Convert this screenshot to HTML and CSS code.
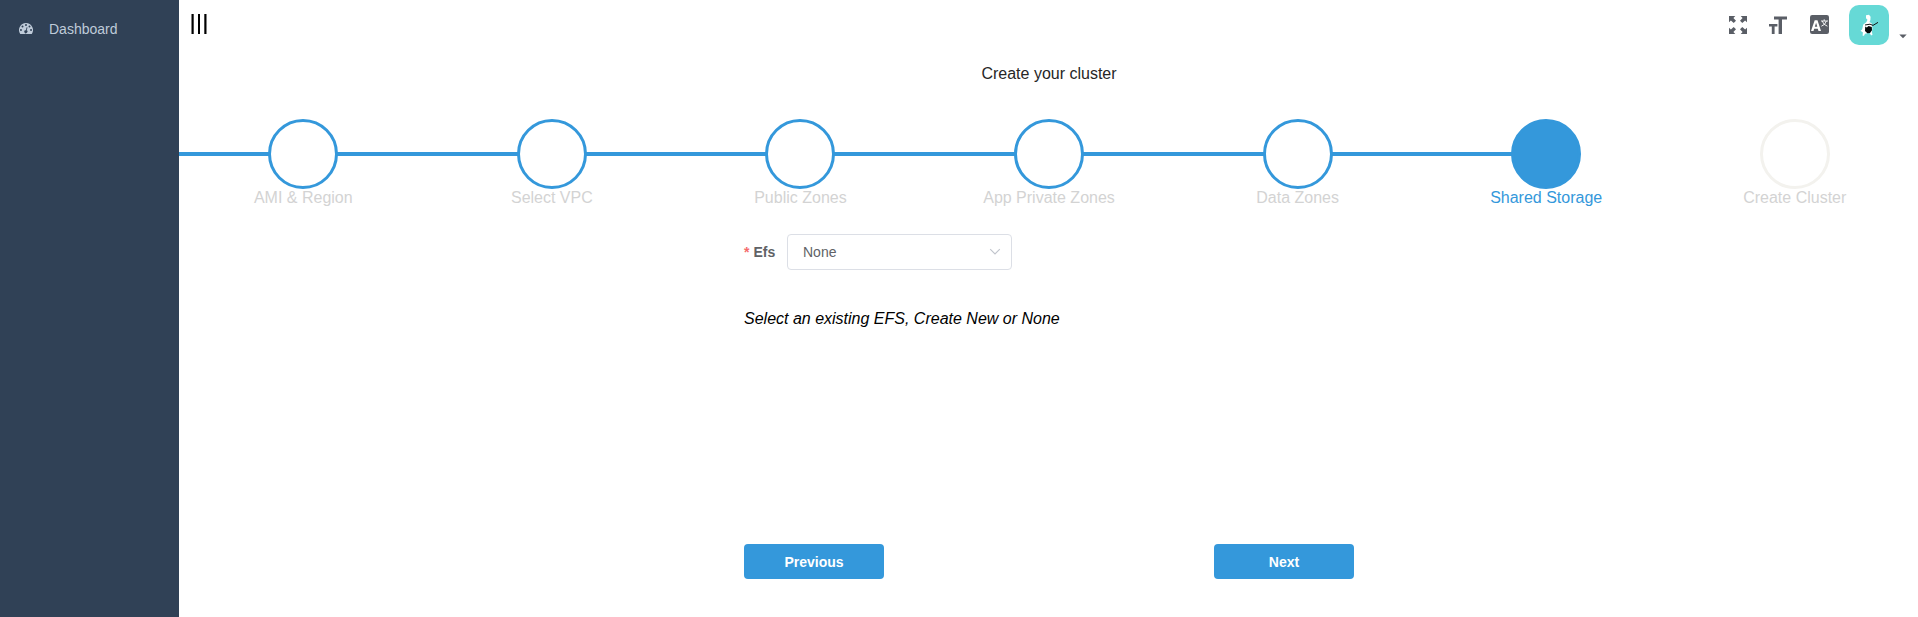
FILE: index.html
```html
<!DOCTYPE html>
<html lang="en">
<head>
<meta charset="utf-8">
<title>Create your cluster</title>
<link rel="stylesheet" href="styles.css">
</head>
<body>
<div class="app">
  <nav class="sidebar">
    <a class="menu-item">
      <svg class="menu-icon" width="14" height="11" viewBox="0 0 128 100"><path fill="currentColor" fill-rule="evenodd" d="M64 0a64 64 0 0 1 54 98q-2 2-5 2H15q-3 0-5-2A64 64 0 0 1 64 0zM18 55a9 9 0 1 0 0 18 9 9 0 0 0 0-18zM32 23a9 9 0 1 0 0 18 9 9 0 0 0 0-18zM64 9a9 9 0 1 0 0 18 9 9 0 0 0 0-18zM96 23a9 9 0 1 0 0 18 9 9 0 0 0 0-18zM110 55a9 9 0 1 0 0 18 9 9 0 0 0 0-18zM70 38l-8 27a14 14 0 1 0 8 2l8-27z"/></svg>
      <span>Dashboard</span>
    </a>
  </nav>
  <div class="main">
    <header class="navbar">
      <svg class="hamburger" width="16" height="20" viewBox="0 0 16 20"><path d="M.5 0h2.2v20H.5zM7 0h2v20H7zM13.3 0h2.2v20h-2.2z"/></svg>
      <div class="tools">
        <svg width="18" height="18" viewBox="0 0 18 18" fill="#5a5e66"><path id="arrow" d="M0 0h6.3L4.4 1.9 7 4.7 4.7 7 1.9 4.4 0 6.3z"/><use href="#arrow" transform="translate(18 0) scale(-1 1)"/><use href="#arrow" transform="translate(0 18) scale(1 -1)"/><use href="#arrow" transform="translate(18 18) scale(-1 -1)"/></svg>
        <svg width="18" height="18" viewBox="0 0 18 18" fill="#5a5e66"><path d="M5 .5h13v3h-5V18H9.6V3.5H5zM0 8h8.4v2.6H5.6V18H2.8v-7.4H0z"/></svg>
        <svg width="19" height="19" viewBox="0 0 19 19"><rect width="19" height="19" rx="2.2" fill="#5a5e66"/><path fill="#fff" fill-rule="evenodd" d="M4.7 5.2h2.8L11 16H8.5l-.7-2.3H4.2L3.5 16H1zM6.1 7.7l-1.3 4.1h2.5z"/><path d="M11 6h7M14.2 4.3V6M12.2 6q1.3 4 5.2 5.2M16.4 6q-1.2 4-5 5.2" stroke="#fff" stroke-width=".9" fill="none"/></svg>
        <div class="profile">
          <svg class="avatar" width="40" height="40" viewBox="0 0 40 40"><rect width="40" height="40" rx="10" fill="#66d9d6"/><path fill="#fff" d="M17 10.2l3-.4 1.6 2-.2 3.2-.9 2 2.3 1.6.6 5-.5 3.4.6 2.8-1.4.6-1.6-2.6-4.5 1-1 2h-1.4l.3-3.4-2.4-1.6 1.6-1.2 1.2-5 3-2.4 1.2-2.4-1.5-1.6z"/><path d="M16 20l5-.8 3 1.2 5-3" fill="none" stroke="#101616" stroke-width="1"/><path fill="#050909" d="M16.2 21.6l1.6.8 1.8-1.4 3.2 1 .2 3.2-2 2.8-2.6.2-2.4-2.2z"/></svg>
          <svg class="caret" width="8" height="5" viewBox="0 0 8 5"><path d="M.3.4h7.4L4 4.3z" fill="#5a5e66"/></svg>
        </div>
      </div>
    </header>
    <section class="wizard">
      <h4 class="title">Create your cluster</h4>
      <ul class="steps">
        <li class="step done"><i class="circle"></i><span>AMI &amp; Region</span></li>
        <li class="step done"><i class="circle"></i><span>Select VPC</span></li>
        <li class="step done"><i class="circle"></i><span>Public Zones</span></li>
        <li class="step done"><i class="circle"></i><span>App Private Zones</span></li>
        <li class="step done"><i class="circle"></i><span>Data Zones</span></li>
        <li class="step active"><i class="circle"></i><span>Shared Storage</span></li>
        <li class="step"><i class="circle"></i><span>Create Cluster</span></li>
      </ul>
      <div class="panel">
        <div class="field">
          <label class="label"><span class="required">*</span>Efs</label>
          <div class="select"><span>None</span><svg width="12" height="8" viewBox="0 0 12 8"><path d="M1.2 1.2L6 6l4.8-4.8" fill="none" stroke="#c0c4cc" stroke-width="1.1"/></svg></div>
        </div>
        <p class="hint">Select an existing EFS, Create New or None</p>
        <div class="actions"><button class="btn">Previous</button><button class="btn">Next</button></div>
      </div>
    </section>
  </div>
</div>
</body>
</html>
```
FILE: styles.css
```css
* { box-sizing: border-box; }
html { overflow: hidden; }
body { margin: 0; font-family: "Liberation Sans", Arial, sans-serif; font-size: 16px; background: #fff; }
.app { display: flex; height: 617px; overflow: hidden; }
.sidebar { flex: 0 0 179px; background: #304156; }
.menu-item { display: flex; align-items: center; height: 56px; padding: 1px 0 0 19px; gap: 16px; color: #bfcbd9; font-size: 14px; }
.menu-item span { line-height: 18px; }
.main { flex: 1; min-width: 0; }
.navbar { display: flex; justify-content: space-between; height: 50px; padding: 5px 11px 0 12px; }
.hamburger { margin-top: 9px; }
.tools { display: flex; gap: 22px; }
.tools > svg { margin-top: 11px; }
.tools > svg:nth-child(3) { margin: 10px 0 0 1px; }
.profile { display: flex; gap: 10px; margin-left: -2px; }
.caret { margin-top: 29px; }
.wizard { width: 1740px; }
.title { margin: 0; padding-top: 15px; font-weight: 400; line-height: 18px; color: #262626; text-align: center; }
.steps { display: flex; margin: 36px 0 0; padding: 0; list-style: none; background: linear-gradient(#3498db, #3498db) 0 33px / 1367px 4px no-repeat; }
.step { flex: 1 1 0; display: flex; flex-direction: column; align-items: center; color: #d3d3d3; line-height: 18px; }
.circle { width: 70px; height: 70px; border: 3px solid #f3f2ee; border-radius: 50%; background: #fff; }
.done .circle { border-color: #3498db; }
.active .circle { border-color: #3498db; background: #3498db; }
.active { color: #3498db; }
.panel { width: 610px; margin: 27px auto 0 565px; }
.field { display: flex; align-items: center; }
.label { width: 43px; font-size: 14px; font-weight: 700; color: #606266; }
.required { margin-right: 4px; color: #f56c6c; }
.select { display: flex; align-items: center; justify-content: space-between; width: 225px; height: 36px; padding: 0 10px 0 15px; border: 1px solid #dcdfe6; border-radius: 4px; font-size: 14px; color: #606266; }
.hint { margin: 40px 0 0; line-height: 18px; font-style: italic; color: #000; }
.actions { display: flex; justify-content: space-between; margin-top: 216px; }
.btn { width: 140px; height: 35px; padding: 0; border: 0; border-radius: 4px; background: #3498db; color: #fff; font: 700 14px "Liberation Sans", Arial, sans-serif; }
```
